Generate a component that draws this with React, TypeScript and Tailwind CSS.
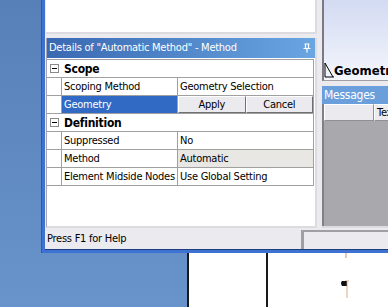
const ui = "font-['DejaVu_Sans_Condensed','DejaVu_Sans',sans-serif] text-[11px] tracking-[-0.25px]";

function Box() {
  return (
    <div className="w-[9px] h-[9px] border border-[#8a8a8a] bg-white flex items-center justify-center">
      <div className="w-[5px] h-px bg-black" />
    </div>
  );
}

function Section({ label }: { label: string }) {
  return (
    <div className="flex h-[18px] border-b border-[#a0a0a0]">
      <div className="w-[14px] flex items-center justify-center bg-white">
        <Box />
      </div>
      <div className="flex-1 pl-[3px] font-bold leading-[18px] text-[12px]">{label}</div>
    </div>
  );
}

function Row({ label, value, grey }: { label: string; value: string; grey?: boolean }) {
  return (
    <div className="flex h-[18px] border-b border-[#a0a0a0]">
      <div className="w-[14px] bg-white" />
      <div className="w-[117px] border-l border-r border-[#a0a0a0] pl-[2px] leading-[17px] whitespace-nowrap">{label}</div>
      <div className={`flex-1 pl-[2px] leading-[17px] whitespace-nowrap ${grey ? "bg-[#e8e7e3]" : ""}`}>{value}</div>
    </div>
  );
}

export default function App() {
  return (
    <div className={`relative w-[388px] h-[307px] overflow-hidden bg-gradient-to-b from-[#5880b8] to-[#6893cb] text-black ${ui}`}>
      {/* window behind */}
      <div className="absolute left-[187px] top-[250px] w-[220px] h-[80px] bg-white border-l-2 border-[#1a1a1a]">
        <div className="absolute left-[77px] top-0 w-[2px] h-full bg-[#1a1a1a]" />
        <div className="absolute left-[156px] top-0 w-[2px] h-[8px] bg-[#e8c8b0]" />
        <svg className="absolute left-[151px] top-[30px]" width="10" height="20" viewBox="0 0 10 20">
          <path d="M5 1 H9 M7 1 V18" stroke="#e8c8b0" strokeWidth="1.5" />
          <path d="M6 1 H2 Q0 3 2 6 H6 Z" fill="#111" />
          <path d="M6 1 V6" stroke="#111" strokeWidth="1.5" />
        </svg>
      </div>

      {/* main window */}
      <div className="absolute left-[41px] top-0 w-[360px] h-[253px] bg-[#3d72d2] border-l border-[#2f58a8] pl-[3px] pb-[3px] flex flex-col">
        <div className="flex-1 flex flex-col bg-[#ebeaef] border-b border-[#1e3d7c]">
          <div className="flex h-[228px]">
            {/* left column */}
            <div className="w-[272px] flex flex-col pl-px">
              <div className="h-[34px] bg-white border-r-2 border-b-2 border-[#dcdbe0]" />
              <div className="h-[4px]" />
              <div className="flex-1 flex flex-col bg-white border-l border-[#a8a8ac] border-r-2 border-r-[#dcdbe0] border-b-2 border-b-[#dcdbe0]">
                <div className="h-[20px] flex items-center justify-between pl-[2px] pr-[4px] bg-gradient-to-r from-[#3a69b2] to-[#6aa6e2] text-white whitespace-nowrap">
                  <span>Details of "Automatic Method" - Method</span>
                  <svg width="8" height="10" viewBox="0 0 8 10">
                    <path d="M1.5 1 H6.5 M2.5 1 V5 M5.5 1 V5 M0.5 5.5 H7.5 M4 5.5 V9.5" stroke="white" strokeWidth="1.2" fill="none" />
                  </svg>
                </div>
                <div className="mt-px mr-px border-t border-r border-[#a0a0a0]">
                  <Section label="Scope" />
                  <Row label="Scoping Method" value="Geometry Selection" />
                  <div className="flex h-[18px] border-b border-[#a0a0a0]">
                    <div className="w-[14px] bg-white" />
                    <div className="w-[117px] border-l border-r border-[#a0a0a0] pl-[2px] leading-[17px] bg-[#316ac5] text-white">Geometry</div>
                    <div className="flex-1 flex">
                      <div className="flex-1 text-center leading-[15px] bg-[#ebeaef] border border-white border-r-[#707070] border-b-[#707070]">Apply</div>
                      <div className="flex-1 text-center leading-[15px] bg-[#ebeaef] border border-white border-r-[#707070] border-b-[#707070]">Cancel</div>
                    </div>
                  </div>
                  <Section label="Definition" />
                  <Row label="Suppressed" value="No" />
                  <Row label="Method" value="Automatic" grey />
                  <Row label="Element Midside Nodes" value="Use Global Setting" />
                </div>
              </div>
            </div>
            {/* splitter */}
            <div className="w-[5px]" />
            {/* right column */}
            <div className="flex-1 flex flex-col">
              <div className="h-[81px] border-l-2 border-[#7a7a80] border-b border-b-[#a0a0a4] bg-gradient-to-b from-[#d3dbf2] to-[#f4f6fc] flex items-end">
                <div className="flex items-end h-[18px] mb-[2px] text-[13px] tracking-normal font-bold leading-none">
                  <svg width="10" height="16" viewBox="0 0 10 16">
                    <path d="M1 1 L9 15 M1 1 V15 H10" stroke="black" strokeWidth="1" fill="none" />
                  </svg>
                  <span className="mb-[1px]">Geometry</span>
                </div>
              </div>
              <div className="h-[5px]" />
              <div className="flex-1 flex flex-col border-b-2 border-[#dcdbe0]">
                <div className="h-[18px] bg-[#6a9fdc] text-white text-[12px] pl-[2px] leading-[18px]">Messages</div>
                <div className="flex-1 flex flex-col bg-[#a9a8ad] border-l-2 border-[#808086]">
                  <div className="flex h-[17px] bg-[#ebeaef]">
                    <div className="w-[50px] border border-white border-r-[#909090] border-b-[#909090]" />
                    <div className="flex-1 pl-[2px] border border-white border-b-[#909090] leading-[15px]">Text</div>
                  </div>
                </div>
              </div>
            </div>
          </div>
          {/* status bar */}
          <div className="h-[2px]" />
          <div className="flex-1 flex">
            <div className="w-[254px] pl-[2px] leading-[18px]">Press F1 for Help</div>
            <div className="w-[3px] border-r border-[#a0a0a4]" />
            <div className="flex-1 border-l-2 border-t-2 border-[#a0a0a4]" />
          </div>
        </div>
      </div>
    </div>
  );
}
